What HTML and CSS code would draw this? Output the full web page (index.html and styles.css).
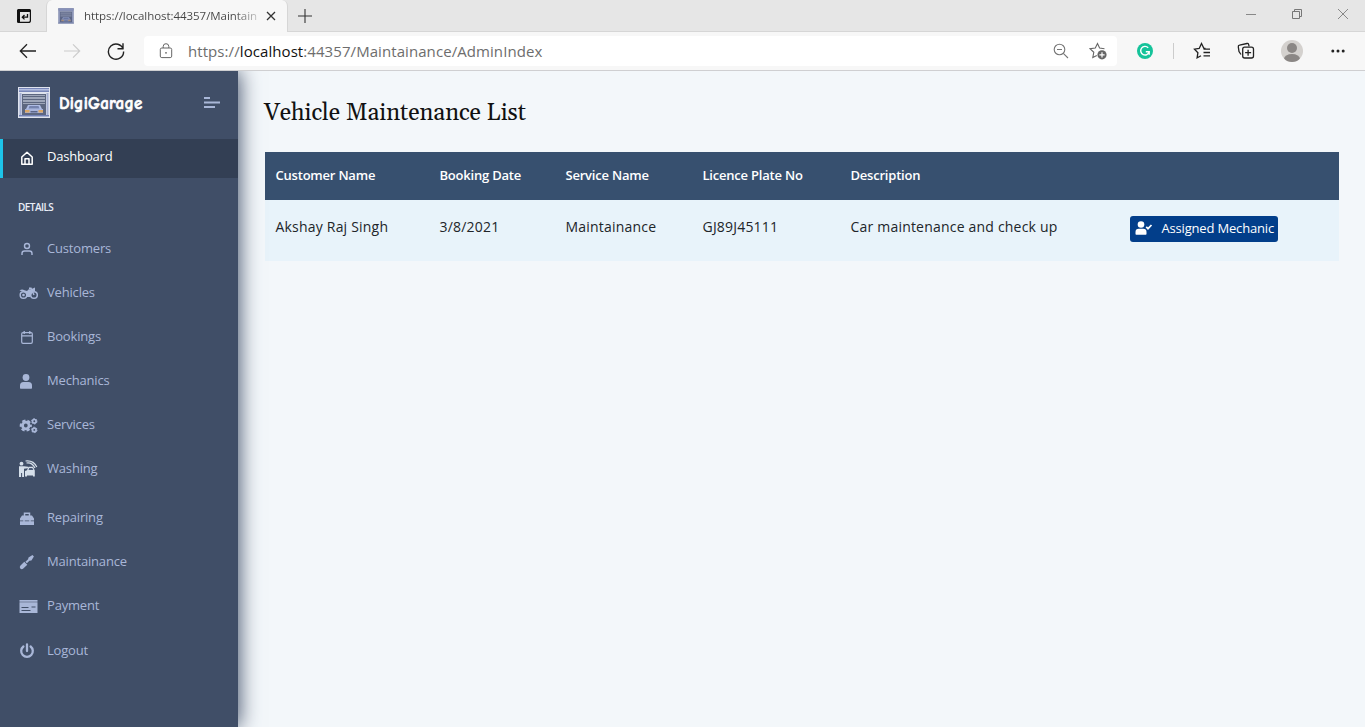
FILE: index.html
```html
<!DOCTYPE html>
<html lang="en">
<head>
<meta charset="utf-8">
<title>DigiGarage</title>
<link rel="stylesheet" href="styles.css">
</head>
<body>
<svg class="defs" aria-hidden="true">
  <symbol id="garage" viewBox="0 0 32 31">
    <path fill="#dfe3ee" d="M0 0h32v31H0z"/>
    <path fill="#7886b8" d="M1 1h30v4H1z"/><path fill="#b4bee0" d="M1 2h30v1.500H1z"/>
    <path fill="#a3add0" d="M1.500 6h2v22h-2zM28.500 6h2v22h-2z"/>
    <path fill="#5d6780" d="M4 7h24v21H4z"/>
    <path fill="#9ea6b9" d="M5 8h22v1H5zM5 10h22v2H5zM5 13h22v2H5zM5 16h22v1H5z"/>
    <path fill="#aebce5" d="M10 18h12l2 4H8z"/><path fill="#7583ae" d="M11.500 19h9l1 2.500h-11z"/>
    <path fill="#a8b4dc" d="M7 22h18v4H7z"/>
    <path fill="#dba765" d="M7 23h4.500v2.500H7zM20.500 23H25v2.500h-4.500z"/>
    <path fill="#5b6588" d="M12.500 24h7v1.500h-7zM7 26h4v1.500H7zM21 26h4v1.500h-4z"/>
    <path fill="#7180b5" d="M1 28h30v1.500H1z"/>
  </symbol>
</svg>
<header class="browser">
  <div class="tabs">
    <svg class="tab-menu" viewBox="0 0 16 16"><rect x="1.600" y="1.600" width="12.800" height="12.800" rx="2" fill="none" stroke="#111" stroke-width="1.200"/><path d="M1 4V2.500Q1 1 2.500 1h11Q15 1 15 2.500V4zM1 3h3v12H2.500Q1 15 1 13.500z" fill="#111"/><path d="M11.500 6v3.200H6.500M8.500 7L6.300 9.200l2.200 2.200" fill="none" stroke="#111" stroke-width="1.300"/></svg>
    <div class="tab">
      <svg class="favicon" preserveAspectRatio="none" viewBox="0 0 32 31"><use href="#garage"/><path fill="#59658c" opacity=".4" d="M0 0h32v31H0z"/></svg>
      <span class="tab-title">https://localhost:44357/Maintain</span>
      <svg class="tab-close" viewBox="0 0 10 10"><path d="M1 1l8 8M9 1L1 9" stroke="#333" stroke-width="1.300"/></svg>
    </div>
    <svg class="tab-new" viewBox="0 0 14 14"><path d="M7 0v14M0 7h14" stroke="#333" stroke-width="1.100"/></svg>
    <div class="window-buttons">
      <svg viewBox="0 0 12 12"><path d="M1 6.500h10" stroke="#888"/></svg>
      <svg viewBox="0 0 12 12"><path d="M1.500 3.500h7v7h-7zM3.500 3.500v-2h7v7h-2" fill="none" stroke="#777"/></svg>
      <svg viewBox="0 0 12 12"><path d="M1 1l10 10M11 1L1 11" stroke="#888"/></svg>
    </div>
  </div>
  <div class="toolbar">
    <svg class="nav-back" viewBox="0 0 18 16"><path d="M17 8H1.500M8 1.300L1.300 8 8 14.700" fill="none" stroke="#222" stroke-width="1.300"/></svg>
    <svg class="nav-forward" viewBox="0 0 18 16"><path d="M1 8h15.500M10 1.300L16.700 8 10 14.700" fill="none" stroke="#ccc" stroke-width="1.200"/></svg>
    <svg class="nav-reload" viewBox="0 0 18 18"><path d="M16.200 7.200A7.600 7.600 0 1 0 16.600 9.500M16 1.200v5.600h-5.500" fill="none" stroke="#222" stroke-width="1.400"/></svg>
    <div class="address">
      <svg class="lock" viewBox="0 0 14 16"><rect x="1.300" y="5" width="11.400" height="9.600" rx="1.500" fill="none" stroke="#666"/><path d="M4.200 5V3.500a2.800 2.800 0 0 1 5.600 0V5" fill="none" stroke="#666"/><circle cx="7" cy="9.800" r=".9" fill="#666"/></svg>
      <span class="url">https://<b>localhost</b>:44357/Maintainance/AdminIndex</span>
      <svg class="zoom-out" viewBox="0 0 16 16"><circle cx="6.500" cy="6.500" r="5.300" fill="none" stroke="#777" stroke-width="1.100"/><path d="M4 6.500h5M10.300 10.300l4.700 4.700" stroke="#777" stroke-width="1.100"/></svg>
      <svg class="fav-add" viewBox="0 0 18 18"><path d="M15.500 6.700l-4.900-.6L8.500 1.500 6.300 6.100 1 6.700l3.800 3.600-1 5.200 4-2" fill="none" stroke="#666" stroke-width="1.100"/><circle cx="13" cy="12.800" r="4.600" fill="#666"/><path d="M13 10.200v5.200M10.400 12.800h5.200" stroke="#fff" stroke-width="1.200"/></svg>
    </div>
    <svg class="grammar" viewBox="0 0 16 16"><circle cx="8" cy="8" r="8" fill="#15c39a"/><path d="M11.200 4.800A4.300 4.300 0 1 0 12.200 8.700H8.800M12.200 8.700v3" fill="none" stroke="#fff" stroke-width="1.400"/></svg>
    <i class="divider"></i>
    <svg class="favorites" viewBox="0 0 18 18"><path d="M12.500 6.500H11L8.500 1.500 6.200 6.500l-4.700.7 3.400 3.500-.8 5.200L8 13.800M10.500 7.200H17M10.500 10.500H17M10.500 13.800H17" fill="none" stroke="#222" stroke-width="1.300"/></svg>
    <svg class="collections" viewBox="0 0 18 18"><path d="M4 12.500L2 9.500 1.300 4.800Q1.100 3.400 2.500 3.200L10 1.500q1.200-.3 1.600.9l.5 2" fill="none" stroke="#222" stroke-width="1.300"/><rect x="5.700" y="5.200" width="10.800" height="10.800" rx="2" fill="none" stroke="#222" stroke-width="1.300"/><path d="M11.100 7.700v6M8.100 10.700h6" stroke="#222" stroke-width="1.300"/></svg>
    <svg class="profile" viewBox="0 0 22 22"><clipPath id="pc"><circle cx="11" cy="11" r="11"/></clipPath><g clip-path="url(#pc)"><path fill="#d4d1ce" d="M0 0h22v22H0z"/><circle cx="11" cy="8" r="5" fill="#8b8785"/><ellipse cx="11" cy="19" rx="8" ry="5" fill="#8b8785"/></g></svg>
    <svg class="more" viewBox="0 0 14 4"><g fill="#222"><circle cx="1.800" cy="2" r="1.500"/><circle cx="7" cy="2" r="1.500"/><circle cx="12.200" cy="2" r="1.500"/></g></svg>
  </div>
</header>
<div class="app">
  <aside class="sidebar">
    <div class="brand">
      <svg class="brand-logo" viewBox="0 0 32 31"><use href="#garage"/></svg>
      <span class="brand-name">DigiGarage</span>
      <svg class="brand-toggle" viewBox="0 0 16 12"><path d="M0 1h6M0 5.500h16M0 10h11" stroke="#a9b7d8" stroke-width="2.200"/></svg>
    </div>
    <nav class="menu">
      <a class="item active"><svg viewBox="0 0 20 20"><path d="M4.800 9L10 4.200 15.200 9v7.200H4.800zM8 16v-5.300h4V16" fill="none" stroke="#fff" stroke-width="1.500" stroke-linejoin="round"/></svg><span>Dashboard</span></a>
      <div class="section">DETAILS</div>
      <a class="item"><svg viewBox="0 0 20 20"><circle cx="10" cy="7" r="2.500" fill="none" stroke="currentColor" stroke-width="1.400"/><path d="M5 16v-1.500q0-2.500 2.500-2.500h5q2.500 0 2.500 2.500V16" fill="none" stroke="currentColor" stroke-width="1.400"/></svg><span>Customers</span></a>
      <a class="item"><svg viewBox="0 0 20 20"><g fill="none" stroke="currentColor" stroke-width="1.500"><circle cx="6.500" cy="12" r="3.300"/><circle cx="17" cy="12" r="3.300"/><path d="M12 5.200h2l3 6.800"/></g><path d="M2.500 7.500Q5 5.500 7.500 7.300L10 8l1.800-1.700h4l-.3 2-2.200 5.700H9.500L9 10.500 7 9z" fill="currentColor"/><circle cx="6.500" cy="12" r="1.300" fill="currentColor"/><path d="M14.500 6l3.500-1.500V8h-3z" fill="currentColor"/></svg><span>Vehicles</span></a>
      <a class="item"><svg viewBox="0 0 20 20"><rect x="4.700" y="5.700" width="10.600" height="10.600" rx="1.300" fill="none" stroke="currentColor" stroke-width="1.200"/><path d="M4.700 8.800h10.600M7.200 4v3M12.800 4v3" stroke="currentColor" stroke-width="1.300"/></svg><span>Bookings</span></a>
      <a class="item"><svg viewBox="0 0 20 20"><circle cx="9" cy="6.500" r="3.400" fill="currentColor"/><path d="M3 17v-2.500Q3 11 6.500 11h5q3.500 0 3.500 3.500V17q0 .7-.7.700H3.700Q3 17.700 3 17z" fill="currentColor"/></svg><span>Mechanics</span></a>
      <a class="item"><svg viewBox="0 0 20 20"><g fill="none" stroke="currentColor"><circle cx="8.800" cy="10.500" r="3.300" stroke-width="2.800"/><circle cx="8.800" cy="10.500" r="5" stroke-width="2.200" stroke-dasharray="3.200 2.036" stroke-dashoffset="1.600"/><circle cx="17.300" cy="6.300" r="1.800" stroke-width="1.700"/><circle cx="17.300" cy="14.900" r="1.800" stroke-width="1.700"/><circle cx="17.300" cy="6.300" r="2.700" stroke-width="1" stroke-dasharray="1.600 1.227"/><circle cx="17.300" cy="14.900" r="2.700" stroke-width="1" stroke-dasharray="1.600 1.227"/></g></svg><span>Services</span></a>
      <a class="item washing"><svg viewBox="0 0 20 20"><g fill="#d5dfea"><circle cx="4.500" cy="4.700" r="1.900"/><path d="M2 7.300h5l4 .4v1.600L7 9.800v8.200H5.100v-4h-1v4H2z"/><path d="M8 12l2-.8 1.500-3.400h4.500l1.800 3.700v6H16V16.500h-6v1H8z"/></g><path d="M9.500 4q5.500-1 8.500 5M8.500 2q8-1 11.300 6" fill="none" stroke="#d5dfea" stroke-width="1.200"/><path d="M12.300 9h3l1 2h-4.800z" fill="#4b5b78"/></svg><span>Washing</span></a>
      <a class="item"><svg viewBox="0 0 20 20"><path d="M7.500 8V5.300h5V8" fill="none" stroke="currentColor" stroke-width="1.500"/><path d="M5 7.500h10l2 3v2H3v-2zM3 13.300h14V17H3z" fill="currentColor"/><path d="M7 11.500v3M13 11.500v3" stroke="currentColor" stroke-width="1.500"/></svg><span>Repairing</span></a>
      <a class="item"><svg viewBox="0 0 20 20"><path d="M11.500 5.500L15.500 3l1.400 1.400-2.500 4-2 .3-2.500 2.500-1.500-1.500 2.700-2.400zM7.300 9.800l3 3-4 3.800q-1.600 1.200-3 0-1.200-1.600.2-3.200z" fill="currentColor"/></svg><span>Maintainance</span></a>
      <a class="item"><svg viewBox="0 0 20 20"><path d="M2.500 4h18v1.700h-18zM2.500 6.300h18V17h-18z" fill="currentColor"/><path d="M4.500 11.500h7M4.500 14.500h9M14.500 11h4" stroke="#404e67" stroke-width="1.100"/></svg><span>Payment</span></a>
      <a class="item logout"><svg viewBox="0 0 20 20"><path d="M6.400 5.500a5.800 5.800 0 1 0 7.200 0M10 3.500v6.500" fill="none" stroke="currentColor" stroke-width="2.300" stroke-linecap="round"/></svg><span>Logout</span></a>
    </nav>
  </aside>
  <main class="content">
    <h1>Vehicle Maintenance List</h1>
    <table class="list">
      <colgroup><col class="c1"><col class="c2"><col class="c3"><col class="c4"><col class="c5"><col></colgroup>
      <thead><tr><th>Customer Name</th><th>Booking Date</th><th>Service Name</th><th>Licence Plate No</th><th>Description</th><th></th></tr></thead>
      <tbody><tr><td>Akshay Raj Singh</td><td>3/8/2021</td><td>Maintainance</td><td>GJ89J45111</td><td>Car maintenance and check up</td><td class="action"><a class="assign"><svg viewBox="0 0 18 14"><circle cx="6" cy="3.500" r="3.300" fill="#fff"/><path d="M.5 13v-2Q.5 7.700 3.800 7.700h4.400q3.300 0 3.300 3.300v2q0 .7-.7.700H1.200q-.7 0-.7-.7z" fill="#fff"/><path d="M11.200 5.800l1.800 1.900L16.500 4" fill="none" stroke="#fff" stroke-width="1.700"/></svg><span>Assigned Mechanic</span></a></td></tr></tbody>
    </table>
  </main>
</div>
</body>
</html>
```

FILE: styles.css
```css
* { box-sizing: border-box; }
body { margin: 0; height: 727px; overflow: hidden; display: flex; flex-direction: column; font-family: "Open Sans", sans-serif; background: #f3f7fa; }
svg { display: block; flex: none; }
.defs { position: absolute; width: 0; height: 0; }
.browser { height: 71px; flex: none; background: #f7f7f7; border-bottom: 1px solid #cfcfd1; }
.tabs { height: 32px; display: flex; background: #e6e6e6; border-bottom: 1px solid #d6d6d6; }
.tab-menu { width: 16px; height: 16px; margin: 8px 0 0 16px; }
.tab { width: 242px; height: 32px; margin-left: 14px; padding: 0 11px; display: flex; align-items: center; background: #f7f7f7; border: 1px solid #d6d6d6; border-width: 0 1px; border-radius: 6px 6px 0 0; }
.favicon { width: 16px; height: 16px; }
.tab-title { width: 176px; margin-left: 10px; padding-bottom: 2px; white-space: nowrap; font-size: 11.5px; letter-spacing: -0.05px; color: transparent; background: linear-gradient(90deg, #444 85%, #ccc 99%); background-clip: text; -webkit-background-clip: text; }
.tab-close { width: 10px; height: 10px; margin-left: 6px; }
.tab-new { width: 14px; height: 14px; margin: 9px 0 0 10px; }
.window-buttons { display: flex; gap: 34px; margin: 8px 16px 0 auto; }
.window-buttons svg { width: 12px; height: 12px; }
.toolbar { height: 38px; display: flex; align-items: center; }
.nav-back { width: 18px; height: 16px; margin-left: 19px; }
.nav-forward { width: 18px; height: 16px; margin-left: 26px; }
.nav-reload { width: 18px; height: 18px; margin-left: 26px; }
.address { width: 973px; height: 30px; margin-left: 19px; display: flex; align-items: center; background: #fff; border-radius: 4px; }
.lock { width: 14px; height: 16px; margin-left: 15px; }
.url { margin-left: 15px; font-size: 15px; letter-spacing: 0.075px; color: #6d6d6d; white-space: nowrap; }
.url b { font-weight: 400; color: #111; }
.zoom-out { width: 16px; height: 16px; margin-left: auto; }
.fav-add { width: 18px; height: 18px; margin: 0 10px 0 20px; }
.grammar { width: 16px; height: 16px; margin-left: 20px; }
.divider { width: 1px; height: 16px; margin-left: 20px; background: #ccc; }
.favorites { width: 18px; height: 18px; margin-left: 19px; }
.collections { width: 18px; height: 18px; margin-left: 26px; }
.profile { width: 22px; height: 22px; margin-left: 26px; }
.more { width: 14px; height: 4px; margin-left: 28px; }
.app { flex: 1; display: flex; min-height: 0; }
.sidebar { width: 238px; flex: none; background: #404e67; box-shadow: 1px 0 20px #3f4d67; clip-path: inset(0 -40px 0 0); color: #a9b7d8; }
.brand { height: 68px; padding: 16px 18px 0; display: flex; }
.brand-logo { width: 32px; height: 31px; }
.brand-name { margin: 7px 0 0 9px; font-family: "Comic Neue", "Comic Sans MS", "Lato", sans-serif; font-weight: 900; font-size: 17px; line-height: 20px; letter-spacing: 0.2px; color: #fff; -webkit-text-stroke: 0.6px #fff; }
.brand-toggle { width: 16px; height: 12px; margin: 10px 0 0 auto; }
.menu { display: flex; flex-direction: column; }
.item { height: 34px; margin-bottom: 10px; padding-left: 17px; display: flex; align-items: center; font-size: 13px; line-height: 18px; letter-spacing: -0.18px; }
.item svg { width: 20px; height: 20px; overflow: visible; }
.item span { margin-left: 10px; padding-bottom: 2px; }
.active { height: 39px; margin: 0; padding-left: 14px; padding-bottom: 3px; border-left: 3px solid #1dc4e9; background: #333f54; color: #fff; }
.active svg { margin-top: 1px; }
.section { height: 54px; padding: 22px 18px 0; font-size: 10px; line-height: 14px; font-weight: 600; letter-spacing: -0.55px; color: #e8edf7; }
.washing { margin-bottom: 15px; }
.logout { padding-top: 1px; }
.logout svg { margin-top: 1px; }
.content { flex: 1; padding: 27px 26px 0 27px; }
h1 { margin: 0 0 23px -1px; font-family: "Georgia", "Gelasio", "Liberation Serif", serif; font-weight: 400; font-size: 23.5px; line-height: 31px; letter-spacing: -0.03px; color: #111; }
.list { width: 1074px; table-layout: fixed; border-collapse: collapse; text-align: left; }
.c1 { width: 164px; } .c2 { width: 126px; } .c3 { width: 137px; } .c4 { width: 148px; } .c5 { width: 279px; }
th { height: 48px; padding: 0 10.5px 2px; background: #37506f; color: #fff; font-size: 13px; font-weight: 600; letter-spacing: -0.21px; white-space: nowrap; }
td { height: 61px; padding: 0 10.5px 9px; background: #e8f3fa; color: #212529; font-size: 14px; letter-spacing: 0.2px; white-space: nowrap; }
.action { padding-left: 11px; }
.assign { width: 148px; height: 26px; margin-top: 6px; padding: 0 4px 0 5px; display: flex; align-items: center; justify-content: space-between; border-radius: 3px; background: #023e8a; color: #fff; font-size: 13px; letter-spacing: -0.17px; }
.assign svg { width: 18px; height: 14px; margin-top: -2px; }
.assign span { padding-bottom: 2px; }
```
